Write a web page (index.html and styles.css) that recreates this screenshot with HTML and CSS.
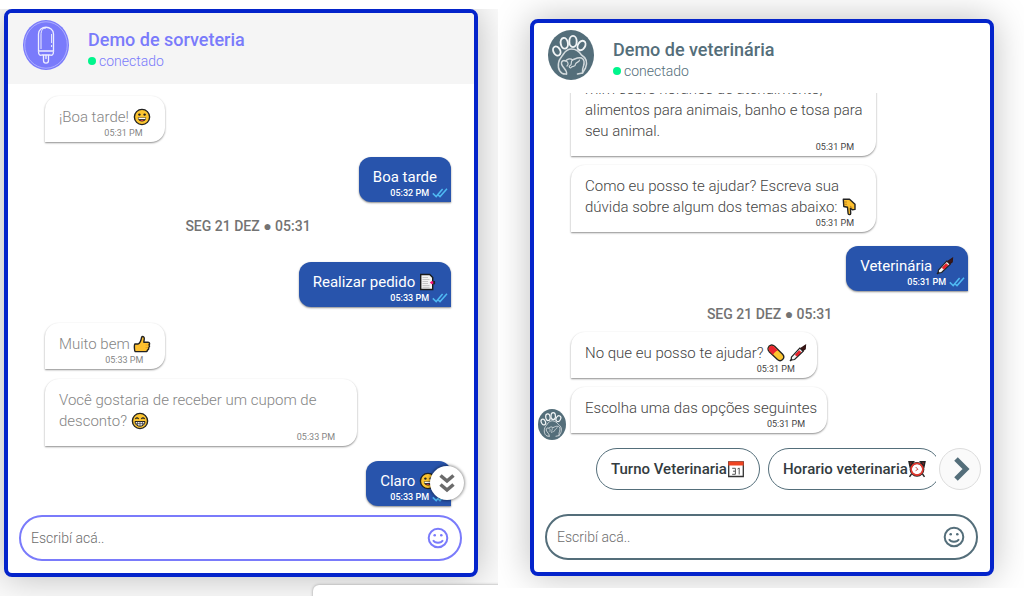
FILE: index.html
```html
<!DOCTYPE html>
<html lang="pt-BR">
<head>
<meta charset="utf-8">
<title>Demos de chat</title>
<link rel="stylesheet" href="styles.css">
</head>
<body>
<svg class="sprite" aria-hidden="true">
  <symbol id="i-smile" viewBox="0 0 22 22">
    <g fill="none" stroke="currentColor" stroke-width="2"><circle cx="11" cy="11" r="9.3"/><path d="M6 13.2c2 3.4 8 3.4 10 0" stroke-width="1.8"/></g>
    <circle cx="7.7" cy="8.3" r="1.3" fill="currentColor"/><circle cx="14.3" cy="8.3" r="1.3" fill="currentColor"/>
  </symbol>
  <symbol id="i-ticks" viewBox="0 0 16 10">
    <path d="M.8 5.4 4.2 8.6 10.6 1M6.4 7.2l1.6 1.4L15 .8" fill="none" stroke="#4fb9f2" stroke-width="1.5"/>
  </symbol>
  <symbol id="e-grin" viewBox="0 0 18 18">
    <circle cx="9" cy="9" r="7.6" fill="#fdc530" stroke="#222" stroke-width="1.4"/>
    <circle cx="6.4" cy="6.6" r="1.2" fill="#222"/><circle cx="11.6" cy="6.6" r="1.2" fill="#222"/>
    <path d="M4.8 9.6h8.400c0 5.200-8.400 5.200-8.400 0z" fill="#222"/><path d="M5.500 9.800h7v1.300h-7z" fill="#fff"/><path d="M7 12.600q2-1.200 4 0-2 1-4 0z" fill="#e8404a"/>
  </symbol>
  <symbol id="e-beam" viewBox="0 0 18 18">
    <circle cx="9" cy="9" r="7.6" fill="#fdc530" stroke="#222" stroke-width="1.4"/>
    <path d="M4.3 7q1.7-2.2 3.4 0M10.3 7q1.7-2.2 3.4 0" fill="none" stroke="#222" stroke-width="1.1"/>
    <path d="M4 9.5h10c0 6.3-10 6.3-10 0z" fill="#e9e9e9" stroke="#222"/><path d="M4.5 11.6h9M6.5 9.5v3.8M9 9.5v4.5M11.5 9.5v3.8" stroke="#444" stroke-width=".7"/>
  </symbol>
  <symbol id="e-thumb" viewBox="0 0 18 18">
    <path d="M2 9h3.2C7 8 8 6 8.600 2.300 9.300 1 11.400 1.600 11.300 3.600L10.800 7.200H15c2 0 2 2.400.8 2.800 1.200.8.8 2.300-.3 2.600.5 1.100 0 2.100-1 2.300 0 1.300-.9 1.700-2 1.700H2.200C1.300 16 1 9.500 2 9z" fill="#fdc02f" stroke="#222" stroke-width="1.4" stroke-linejoin="round"/>
    <path d="M12.500 10h3M12.500 12.600h2.800" stroke="#e09a1b" stroke-width=".7"/>
  </symbol>
  <symbol id="e-down" viewBox="0 0 18 18">
    <path d="M2.300 1.200h6.200l5.500 5v5.200l-2.600.4-2-1.500.3 5.200c0 1.500-2.500 1.600-2.600 0L6.500 9.200 2.800 8.500z" fill="#fdc02f" stroke="#222" stroke-width="1.400" stroke-linejoin="round"/>
    <path d="M3 4h3M3 6.300h3M9 8l2.500 2" stroke="#b47612" stroke-width=".8"/>
  </symbol>
  <symbol id="e-doc" viewBox="0 0 18 18">
    <path d="M1.700 1.500h9l3 3v12h-12z" fill="#f4f4f4" stroke="#1b1b1b" stroke-width="1.400"/>
    <path d="M3.500 4.500h5.500M3.500 6.500h7M3.500 8.500h5.500M3.500 10.500h5.500M3.500 12.500h7M3.500 14.300h7" stroke="#bbb" stroke-width=".8"/>
    <path d="M10.800 9.500l2-1.500 2.200.8v1.700l-2.200.8z" fill="#f0127c"/><path d="M14.300 8h1.800v3.300h-1.800z" fill="#222"/>
  </symbol>
  <symbol id="e-syringe" viewBox="0 0 18 18">
    <path d="M1 17l2.400-2.400" stroke="#222" stroke-width="1.400"/>
    <path d="M2.400 13.200 10.800 4l3.400 3.300-8.600 8.200-3.400.6z" fill="#f3f3f3" stroke="#222" stroke-width="1.200"/>
    <path d="M6.300 10.700l4-4 1.500 1.500-4 4z" fill="#e5232c" stroke="#e5232c"/>
    <path d="M12 4.200l4.500-3-.3 3.800-2 1.500z" fill="#3d1717" stroke="#321515" stroke-width="1.200"/>
  </symbol>
  <symbol id="e-pill" viewBox="0 0 18 18">
    <path d="M2 2.300c2-2 4-1.500 5.600 0l8 8c3.400 3.800-1.600 8.400-5.200 5.200L2.200 7.700C.8 6 .6 4 2 2.300z" fill="#fdc530" stroke="#222" stroke-width="1.300"/>
    <path d="M2.400 2.800C4 1.300 5.800 1.500 7.100 2.800l3.700 3.700c-1.700.4-4.200 2.700-4.700 4.500L2.600 7.300C1.400 6 1.300 4 2.400 2.800z" fill="#ea2530"/>
  </symbol>
  <symbol id="e-cal" viewBox="0 0 18 18">
    <path d="M1.700 2h14.600v14.500H1.700z" fill="#fff" stroke="#333" stroke-width="1.300"/><path d="M1.400 1.500h15.200v4H1.400z" fill="#ee4422"/>
    <path d="M5.200 8.300h3.200v6H5.200M6 11.200h2.400M10.500 9l1.700-1v6.500" fill="none" stroke="#555"/>
  </symbol>
  <symbol id="e-clock" viewBox="0 0 18 18">
    <path d="M1 1.800h4.500L2 6.500zM17 1.800h-4.500L16 6.500zM3.500 14l-2 2.800M14.500 14l2 2.800" fill="#8d2424" stroke="#222" stroke-width="1.400"/>
    <circle cx="9" cy="9.300" r="6.300" fill="#fff" stroke="#222" stroke-width="2.200"/><circle cx="9" cy="9.300" r="5.900" fill="none" stroke="#e5392f" stroke-width="1.700"/>
    <path d="M7.700 7l2.200 2.300-2.300 1.400" fill="none" stroke="#b33" stroke-width=".9"/>
  </symbol>
  <symbol id="i-icecream" viewBox="0 0 46 50" preserveAspectRatio="none">
    <ellipse cx="23" cy="25" rx="23" ry="25" fill="#7a7bfb"/>
    <ellipse cx="23" cy="25" rx="21.300" ry="23.200" fill="none" stroke="#b9baff" stroke-width=".8"/>
    <g fill="none" stroke="#eeeeff" stroke-width="1.300">
      <path d="M15.500 31V14c0-9 15-9 15 0v17z"/><path d="M18 29V15c0-5 2-7 5-7" stroke-width="1"/><path d="M28.600 14v9M28.600 25v2" stroke-width="1"/>
      <path d="M15.500 31.500c0 4 2 4 3.500 3.500h8c1.500.5 3.500.5 3.500-3.500M20.500 35v5.500c0 3.500 5 3.500 5 0V35M23 35v4"/>
    </g>
  </symbol>
  <symbol id="i-paw" viewBox="0 0 46 50" preserveAspectRatio="none">
    <ellipse cx="23" cy="25" rx="23" ry="25" fill="#546e7a"/>
    <g fill="none" stroke="#f2f5f6" stroke-width="1.900">
      <ellipse cx="8.800" cy="21" rx="3.400" ry="4.800" transform="rotate(-28 8.800 21)"/><ellipse cx="16.300" cy="13.300" rx="3.600" ry="5.400" transform="rotate(-10 16.300 13.300)"/>
      <ellipse cx="25" cy="11.500" rx="3.700" ry="5.600"/><ellipse cx="33.500" cy="15.500" rx="3.600" ry="5" transform="rotate(30 33.500 15.500)"/>
    </g>
    <g fill="none" stroke="#d3dadd" stroke-width="1.500" stroke-linejoin="round" stroke-linecap="round">
      <path d="M18.500 44c-6 1-9-5-8-11 .5-4 3-6 5-9 2-3 5-5 8-5 4 0 8 3 10 6 5 3 6 8 4 13l-3 5-5 1"/>
      <path d="M18.500 44c1-4-4-6-5-10-.5-3 2-4 4-3 2-2 5-3 7-1 3-1 5-3 9-2 3 1 3 5 2 8-1 2-1 4-1 7"/>
      <path d="M18 31c2 1 3 3 1 5M24.500 30c-3 2 1 4-3 6-1 1 1 3 2 1 2-1 4 0 4-3 1-2 4-2 4-4" stroke-width="1.200"/>
    </g>
  </symbol>
</svg>

<main class="demos">
  <div class="stage stage-left">
    <section class="chat chat-ice" aria-label="Demo de sorveteria">
      <header class="chat-head">
        <svg class="avatar"><use href="#i-icecream"/></svg>
        <div class="who">
          <h1 class="title">Demo de sorveteria</h1>
          <p class="status">conectado</p>
        </div>
      </header>
      <div class="messages">
        <div class="msg"><p>¡Boa tarde! <svg class="emoji"><use href="#e-grin"/></svg></p><time>05:31 PM</time></div>
        <div class="msg sent"><p>Boa tarde</p><time>05:32 PM <svg class="ticks"><use href="#i-ticks"/></svg></time></div>
        <div class="date date-wide">SEG 21 DEZ ● 05:31</div>
        <div class="msg sent"><p>Realizar pedido <svg class="emoji"><use href="#e-doc"/></svg></p><time>05:33 PM <svg class="ticks"><use href="#i-ticks"/></svg></time></div>
        <div class="msg"><p>Muito bem <svg class="emoji"><use href="#e-thumb"/></svg></p><time>05:33 PM</time></div>
        <div class="msg"><p>Você gostaria de receber um cupom de desconto? <svg class="emoji"><use href="#e-beam"/></svg></p><time>05:33 PM</time></div>
        <div class="msg sent"><p>Claro <svg class="emoji"><use href="#e-grin"/></svg></p><time>05:33 PM <svg class="ticks"><use href="#i-ticks"/></svg></time></div>
        <button class="to-bottom" type="button" aria-label="Ir para o fim">
          <svg viewBox="0 0 16 20"><path d="M1.500 2.500 8 8l6.500-5.500M1.500 11.500 8 17l6.500-5.500" fill="none" stroke="#6b6b6b" stroke-width="3.600"/></svg>
        </button>
      </div>
      <form class="composer">
        <input type="text" placeholder="Escribí acá.." aria-label="Mensagem">
        <button type="button" aria-label="Emojis"><svg><use href="#i-smile"/></svg></button>
      </form>
    </section>
    <div class="peek"></div>
  </div>

  <div class="stage stage-right">
    <section class="chat chat-vet" aria-label="Demo de veterinária">
      <header class="chat-head">
        <svg class="avatar"><use href="#i-paw"/></svg>
        <div class="who">
          <h1 class="title">Demo de veterinária</h1>
          <p class="status">conectado</p>
        </div>
      </header>
      <div class="messages">
        <div class="msg"><p>mim sobre horários de atendimento, alimentos para animais, banho e tosa para seu animal.</p><time>05:31 PM</time></div>
        <div class="msg"><p>Como eu posso te ajudar? Escreva sua dúvida sobre algum dos temas abaixo: <svg class="emoji"><use href="#e-down"/></svg></p><time>05:31 PM</time></div>
        <div class="msg sent"><p>Veterinária <svg class="emoji"><use href="#e-syringe"/></svg></p><time>05:31 PM <svg class="ticks"><use href="#i-ticks"/></svg></time></div>
        <div class="date">SEG 21 DEZ ● 05:31</div>
        <div class="msg"><p>No que eu posso te ajudar? <svg class="emoji"><use href="#e-pill"/></svg> <svg class="emoji"><use href="#e-syringe"/></svg></p><time>05:31 PM</time></div>
        <div class="with-avatar">
          <svg class="mini"><use href="#i-paw"/></svg>
          <div class="msg"><p>Escolha uma das opções seguintes</p><time>05:31 PM</time></div>
        </div>
      </div>
      <div class="options">
        <div class="option-list">
          <button class="option" type="button">Turno Veterinaria<svg class="emoji"><use href="#e-cal"/></svg></button>
          <button class="option" type="button">Horario veterinaria<svg class="emoji"><use href="#e-clock"/></svg></button>
        </div>
        <button class="next" type="button" aria-label="Próximas opções">
          <svg viewBox="0 0 16 24"><path d="M2 2l10 10L2 22" fill="none" stroke="#546e7a" stroke-width="5"/></svg>
        </button>
      </div>
      <form class="composer">
        <input type="text" placeholder="Escribí acá.." aria-label="Mensagem">
        <button type="button" aria-label="Emojis"><svg><use href="#i-smile"/></svg></button>
      </form>
    </section>
  </div>
</main>
</body>
</html>
```
FILE: styles.css
```css
* { box-sizing: border-box; }
body { margin: 0; background: #fff; font-family: Roboto, "Liberation Sans", sans-serif; }
h1, p { margin: 0; }
button { padding: 0; background: none; border: 0; font: inherit; cursor: pointer; }
svg { display: block; }
.sprite { position: absolute; width: 0; height: 0; }

.demos { display: grid; grid-template-columns: 498fr 526fr; height: 100vh; min-height: 560px; }
.stage { display: flex; min-width: 0; min-height: 0; overflow: hidden; }
.stage-left { position: relative; margin-top: 9px; padding: 0 20px 19px 4px; background: #fbfbfb; }
.stage-right { margin-bottom: 8px; padding: 19px 30px 12px 32px; background: #fff; }
.peek {
  position: absolute; right: -10px; bottom: -10px; width: 195px; height: 21px;
  background: #fff; border-radius: 6px; box-shadow: 0 0 3px #999;
}

.chat {
  flex: 1; min-width: 0; display: flex; flex-direction: column;
  background: #fff; border: 4px solid #0424cb; border-radius: 8px;
  box-shadow: 0 0 36px rgba(0, 0, 0, .26);
}
.chat-ice { --brand: #7a7bfb; --ink: #858585; }
.chat-vet { --brand: #546e7a; --ink: #444; }

.chat-head { display: flex; align-items: center; gap: 19px; padding: 0 14px 7px; height: 71px; flex: none; color: var(--brand); }
.chat-ice .chat-head { padding-left: 15px; background: #f5f5f5; border-radius: 4px 4px 0 0; }
.chat-vet .chat-head { height: 70px; padding-bottom: 6px; }
.avatar { width: 46px; height: 50px; }
.who { padding-top: 8px; }
.title { font-size: 18px; font-weight: 500; line-height: 23px; }
.status { display: flex; align-items: center; gap: 3px; font-size: 14px; font-weight: 300; line-height: 20px; }
.status::before { content: ""; width: 8px; height: 8px; border-radius: 50%; background: #00f58c; }

.messages {
  position: relative; flex: 1; min-height: 0; display: flex; flex-direction: column;
  align-items: flex-start; gap: 10px; padding: 12px 23px 8px 37px; overflow: hidden;
}
.chat-vet .messages { justify-content: flex-end; gap: 9px; padding: 0 22px 15px 37px; }

.msg {
  flex: none; max-width: 312px; padding: 11px 14px 4px; color: var(--ink); background: #fff;
  border-radius: 14px 14px 14px 0; box-shadow: 0 1px 2px rgba(0, 0, 0, .45);
  font-size: 15px; font-weight: 300; line-height: 21px;
}
.chat-vet .msg { max-width: 305px; padding-right: 10px; }
.msg time {
  display: flex; justify-content: flex-end; align-items: center; gap: 3px; padding-right: 8px;
  font-size: 9px; font-weight: 400; line-height: 10px;
}
.chat-vet .msg time { padding-right: 12px; }
.msg.sent, .chat-vet .msg.sent {
  align-self: flex-end; margin: 5px 0 6px; padding: 10px 14px 4px; background: #2854ac;
  color: #fff; border-radius: 12px 12px 0 12px; font-weight: 400;
}
.msg.sent time, .chat-vet .msg.sent time { margin-right: -11px; padding: 0; font-weight: 500; }
.ticks { width: 16px; height: 10px; }
.emoji { display: inline-block; width: 18px; height: 18px; vertical-align: -4px; }

.date {
  align-self: center; flex: none; margin: -2px 0; color: #737373;
  font-size: 14px; font-weight: 500; line-height: 21px;
}
.date-wide { margin-bottom: 10px; }

.with-avatar { display: flex; align-items: flex-end; gap: 5px; flex: none; margin-left: -33px; }
.mini { width: 28px; height: 31px; margin-bottom: -7px; }

.options { display: flex; align-items: center; gap: 3px; flex: none; padding: 0 9px 24px 62px; }
.option-list { flex: 1; min-width: 0; display: flex; gap: 8px; overflow: hidden; }
.option {
  flex: none; display: flex; align-items: center; height: 42px; padding: 0 14px;
  border: 1px solid #546e7a; border-radius: 21px; color: #333b40;
  font-size: 15px; font-weight: 500; white-space: nowrap;
}
.next {
  flex: none; display: grid; place-items: center; width: 42px; height: 42px;
  background: #fafafa; border: 1px solid #ddd; border-radius: 50%;
}
.next svg { width: 16px; height: 24px; margin-left: 3px; }

.to-bottom {
  position: absolute; right: 10px; bottom: 15px; display: grid; place-items: center;
  width: 34px; height: 34px; background: #fff; border-radius: 50%; box-shadow: 0 0 3px 1px rgba(0, 0, 0, .4);
}
.to-bottom svg { width: 16px; height: 20px; }

.composer {
  display: flex; align-items: center; flex: none; height: 46px; margin: 0 12px 12px 11px;
  padding: 0 11px 0 10px; border: 2px solid var(--brand); border-radius: 23px;
}
.composer input { flex: 1; min-width: 0; padding: 0; border: 0; outline: 0; background: none; font: 300 14px/20px Roboto, sans-serif; }
.composer input::placeholder { color: #6d6d6d; opacity: 1; }
.composer button { color: var(--brand); }
.composer svg { width: 22px; height: 22px; }
```
